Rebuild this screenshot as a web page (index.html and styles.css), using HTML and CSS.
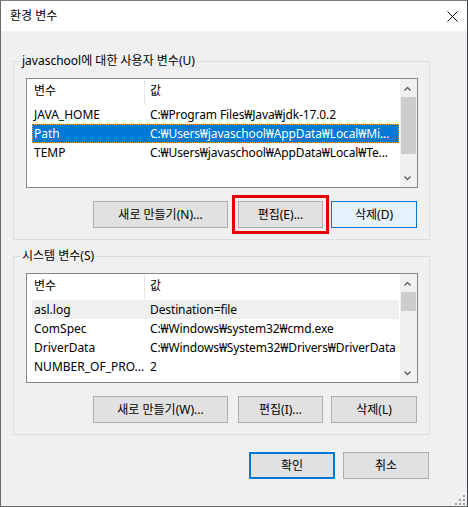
FILE: index.html
```html
<!DOCTYPE html>
<html lang="ko">
<head>
<meta charset="utf-8">
<title>환경 변수</title>
<link rel="stylesheet" href="styles.css">
</head>
<body>
<div class="window">
  <div class="titlebar">
    <span class="title">환경 변수</span>
    <svg class="close" width="11" height="11" viewBox="0 0 11 11"><path d="M0.5 0.5 L10.5 10.5 M10.5 0.5 L0.5 10.5" stroke="#000" stroke-width="1" fill="none"/></svg>
  </div>
  <div class="content">
    <section class="group">
      <div class="group-title">javaschool에 대한 사용자 변수(U)</div>
      <div class="listview">
        <div class="lv-body">
          <div class="lv-header"><div class="h-name">변수</div><div class="h-value">값</div></div>
          <div class="lv-row"><span class="c-name">JAVA_HOME</span><span class="c-value">C:₩Program Files₩Java₩jdk-17.0.2</span></div>
          <div class="lv-row selected"><span class="c-name">Path</span><span class="c-value">C:₩Users₩javaschool₩AppData₩Local₩Mi...</span></div>
          <div class="lv-row"><span class="c-name">TEMP</span><span class="c-value">C:₩Users₩javaschool₩AppData₩Local₩Te...</span></div>
        </div>
        <div class="scrollbar">
          <div class="sb-btn"><svg width="17" height="17" viewBox="0 0 17 17"><path d="M4.5 11.5 L7.5 8.5 L10.5 11.5" stroke="#606060" stroke-width="1.4" fill="none"/></svg></div>
          <div class="sb-track"><div class="sb-thumb thumb-user"></div></div>
          <div class="sb-btn"><svg width="17" height="17" viewBox="0 0 17 17"><path d="M4.5 6.5 L7.5 9.5 L10.5 6.5" stroke="#606060" stroke-width="1.4" fill="none"/></svg></div>
        </div>
      </div>
      <div class="btn-row">
        <button class="btn btn-new">새로 만들기(N)...</button>
        <button class="btn btn-edit marked">편집(E)...</button>
        <button class="btn btn-del hover">삭제(D)</button>
      </div>
    </section>

    <section class="group group-sys">
      <div class="group-title">시스템 변수(S)</div>
      <div class="listview">
        <div class="lv-body">
          <div class="lv-header"><div class="h-name">변수</div><div class="h-value">값</div></div>
          <div class="lv-row hot"><span class="c-name">asl.log</span><span class="c-value">Destination=file</span></div>
          <div class="lv-row"><span class="c-name">ComSpec</span><span class="c-value">C:₩Windows₩system32₩cmd.exe</span></div>
          <div class="lv-row"><span class="c-name">DriverData</span><span class="c-value">C:₩Windows₩System32₩Drivers₩DriverData</span></div>
          <div class="lv-row"><span class="c-name">NUMBER_OF_PRO...</span><span class="c-value">2</span></div>
        </div>
        <div class="scrollbar">
          <div class="sb-btn"><svg width="17" height="17" viewBox="0 0 17 17"><path d="M4.5 11.5 L7.5 8.5 L10.5 11.5" stroke="#606060" stroke-width="1.4" fill="none"/></svg></div>
          <div class="sb-track"><div class="sb-thumb thumb-sys"></div></div>
          <div class="sb-btn"><svg width="17" height="17" viewBox="0 0 17 17"><path d="M4.5 6.5 L7.5 9.5 L10.5 6.5" stroke="#606060" stroke-width="1.4" fill="none"/></svg></div>
        </div>
      </div>
      <div class="btn-row">
        <button class="btn btn-new">새로 만들기(W)...</button>
        <button class="btn btn-edit">편집(I)...</button>
        <button class="btn btn-del">삭제(L)</button>
      </div>
    </section>

    <div class="dialog-buttons">
      <button class="btn btn-dlg default">확인</button>
      <button class="btn btn-dlg">취소</button>
    </div>
  </div>
  <svg class="grip" width="11" height="11" viewBox="0 0 11 11">
    <rect x="8" y="0" width="2" height="2" fill="#a0a0a0"/>
    <rect x="4" y="4" width="2" height="2" fill="#a0a0a0"/>
    <rect x="8" y="4" width="2" height="2" fill="#a0a0a0"/>
    <rect x="0" y="8" width="2" height="2" fill="#a0a0a0"/>
    <rect x="4" y="8" width="2" height="2" fill="#a0a0a0"/>
    <rect x="8" y="8" width="2" height="2" fill="#a0a0a0"/>
  </svg>
</div>
</body>
</html>
```

FILE: styles.css
```css
html, body {
  margin: 0;
  padding: 0;
  background: #f0f0f0;
}

body {
  font-family: "Noto Sans", "Noto Sans CJK KR", sans-serif;
  font-size: 12px;
  color: #000;
}

.window {
  position: relative;
  width: 468px;
  height: 507px;
  box-sizing: border-box;
  border: 1px solid #6a6a6a;
  border-top-color: #7a7a7a;
  border-right-color: #3c4250;
  background: #f0f0f0;
  display: flex;
  flex-direction: column;
}

.titlebar {
  height: 30px;
  background: #fff;
  display: flex;
  align-items: center;
  padding-left: 9px;
  padding-right: 9px;
}

.title {
  font-size: 12px;
  line-height: 16px;
}

.close {
  margin-left: auto;
  display: block;
}

.content {
  padding: 30px 0 0 12px;
  display: flex;
  flex-direction: column;
}

.group {
  width: 417px;
  box-sizing: border-box;
  border: 1px solid #dcdcdc;
  padding: 0 11px 11px 12px;
  display: flex;
  flex-direction: column;
}

.group-sys {
  margin-top: 16px;
}

.group-title {
  margin: -9px 0 0 -6px;
  padding: 0 2px;
  line-height: 16px;
  height: 16px;
  background: #f0f0f0;
  align-self: flex-start;
  white-space: nowrap;
}

.listview {
  margin-top: 9px;
  width: 392px;
  height: 110px;
  box-sizing: border-box;
  border: 1px solid #828790;
  background: #fff;
  display: flex;
  overflow: hidden;
}

.lv-body {
  width: 373px;
  display: flex;
  flex-direction: column;
  overflow: hidden;
}

.lv-header {
  height: 26px;
  flex: none;
  display: flex;
  padding-left: 5px;
}

.h-name {
  width: 113px;
  box-sizing: border-box;
  height: 24px;
  margin-top: 1px;
  line-height: 22px;
  padding-left: 2px;
  border-right: 1px solid #e5e5e5;
}

.h-value {
  height: 24px;
  margin-top: 1px;
  line-height: 22px;
  padding-left: 5px;
}

.lv-row {
  flex: none;
  height: 19px;
  line-height: 19px;
  margin: 0 1px 0 5px;
  display: flex;
  white-space: nowrap;
}

.lv-row.selected {
  background: #0078d7;
  color: #fff;
  outline: 1px dotted #f0a040;
  outline-offset: -1px;
}

.lv-row.hot {
  background: #efefef;
}

.c-name {
  width: 116px;
  flex: none;
  box-sizing: border-box;
  padding-left: 2px;
  overflow: hidden;
}

.c-value {
  padding-left: 2px;
  overflow: hidden;
  letter-spacing: -0.12px;
}

.scrollbar {
  width: 17px;
  flex: none;
  background: #f0f0f0;
  display: flex;
  flex-direction: column;
}

.sb-btn {
  height: 17px;
  flex: none;
}

.sb-btn svg {
  display: block;
}

.sb-track {
  flex: 1;
}

.sb-thumb {
  margin: 1px 1px 0 1px;
  background: #cdcdcd;
}

.thumb-user {
  height: 57px;
}

.thumb-sys {
  height: 19px;
}

.btn-row {
  margin-top: 13px;
  margin-right: 1px;
  display: flex;
  justify-content: flex-end;
}

.btn {
  font-family: "Noto Sans", "Noto Sans CJK KR", sans-serif;
  font-size: 12px;
  color: #000;
  height: 27px;
  box-sizing: border-box;
  border: 1px solid #adadad;
  background: #e1e1e1;
  padding: 0;
  margin: 0;
  line-height: 16px;
  white-space: nowrap;
}

.btn-new {
  width: 135px;
}

.btn-edit {
  width: 85px;
  margin-left: 10px;
}

.btn-del {
  width: 86px;
  margin-left: 8px;
}

.btn.hover {
  background: #e5f1fb;
  border-color: #0078d7;
}

.btn.marked {
  outline: 3px solid #e50000;
  outline-offset: 3px;
}

.dialog-buttons {
  margin-top: 17px;
  width: 416px;
  display: flex;
  justify-content: flex-end;
  gap: 8px;
}

.btn-dlg {
  width: 86px;
}

.btn.default {
  border: 2px solid #0078d7;
}

.grip {
  position: absolute;
  right: 1px;
  bottom: 0;
}
```
